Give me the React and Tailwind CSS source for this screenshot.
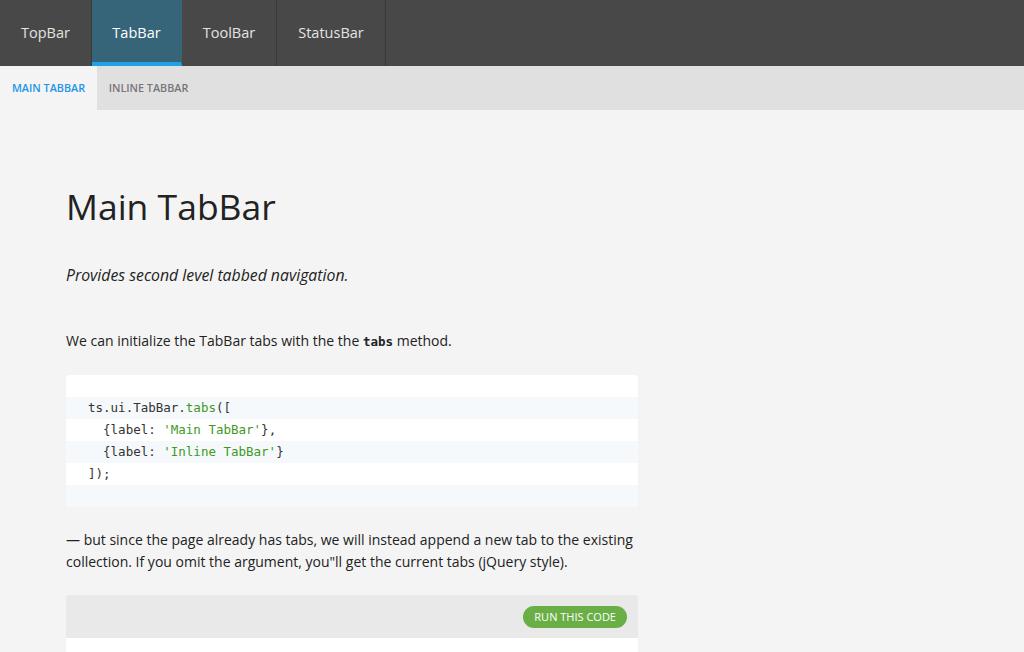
import React from 'react';

const TOP_TABS = [
  { id: 'top', label: 'TopBar', w: 'w-[92px]' },
  { id: 'tab', label: 'TabBar', w: 'w-[90px]' },
  { id: 'tool', label: 'ToolBar', w: 'w-[95px]' },
  { id: 'status', label: 'StatusBar', w: 'w-[109px]' },
];

const CODE_LINES = [
  null,
  [['t', 'ts.ui.TabBar.'], ['f', 'tabs'], ['t', '([']],
  [['t', '  {label: '], ['s', "'Main TabBar'"], ['t', '},']],
  [['t', '  {label: '], ['s', "'Inline TabBar'"], ['t', '}']],
  [['t', ']);']],
  null,
];

function CodeBlock() {
  return (
    <div className="w-[572px] bg-white rounded-sm overflow-hidden font-['DejaVu_Sans_Mono',monospace] text-[12.5px] text-[#333]">
      {CODE_LINES.map((line, i) => (
        <div
          key={i}
          className={`h-[22px] leading-[22px] px-[22px] whitespace-pre ${i % 2 === 1 ? 'bg-[#f5f9fc]' : 'bg-white'}`}
        >
          {line &&
            line.map(([kind, text], j) => (
              <span
                key={j}
                className={kind === 's' || kind === 'f' ? 'text-[#3d9a1e]' : 'text-[#333]'}
              >
                {text}
              </span>
            ))}
        </div>
      ))}
    </div>
  );
}

export default function App() {
  return (
    <div className="min-h-[652px] bg-[#f4f4f4] font-['Open_Sans',sans-serif] text-[#222]">
      {/* Top level tabs */}
      <div className="flex h-[66px] bg-[#484848]">
        {TOP_TABS.map((tab) => {
          const active = tab.id === 'tab';
          return (
            <div
              key={tab.id}
              className={`${tab.w} flex items-center justify-center text-[14.5px] border-r ${
                active
                  ? 'bg-[#366478] text-white border-b-4 border-b-[#1fa0e8] border-r-[#366478] pt-1'
                  : 'text-[#e4e4e4] border-r-[#3a3a3a]'
              }`}
            >
              {tab.label}
            </div>
          );
        })}
      </div>

      {/* Second level tabs */}
      <div className="flex h-[44px] bg-[#e0e0e0] text-[10.8px] font-semibold uppercase">
        <div className="w-[97px] flex items-center justify-center bg-[#f4f4f4] text-[#2196e8]">
          Main TabBar
        </div>
        <div className="w-[103px] flex items-center justify-center text-[#777]">
          Inline TabBar
        </div>
      </div>

      {/* Content */}
      <div className="pl-[66px] pt-[73px]">
        <h1 className="text-[35.5px] leading-[46px] text-[#222]">Main TabBar</h1>
        <p className="mt-[34px] text-[15.8px] italic leading-[24px] text-[#222]">
          Provides second level tabbed navigation.
        </p>
        <p className="mt-[43px] text-[14px] leading-[22px] text-[#222]">
          We can initialize the TabBar tabs with the the{' '}
          <code className="font-['DejaVu_Sans_Mono',monospace] font-bold text-[12.5px]">tabs</code>{' '}
          method.
        </p>
        <div className="mt-[22px]">
          <CodeBlock />
        </div>
        <p className="mt-[22px] w-[580px] text-[14px] leading-[22px] text-[#222]">
          — but since the page already has tabs, we will instead append a new tab to the existing
          collection. If you omit the argument, you"ll get the current tabs (jQuery style).
        </p>
        <div className="mt-[22px] w-[572px] rounded-sm overflow-hidden">
          <div className="h-[43px] bg-[#e9e9e9] flex items-center justify-end pr-[11px]">
            <button className="h-[22px] px-[11px] rounded-full bg-[#6aaf46] text-white text-[11px] uppercase leading-[22px]">
              Run this code
            </button>
          </div>
          <div className="h-[40px] bg-white" />
        </div>
      </div>
    </div>
  );
}
